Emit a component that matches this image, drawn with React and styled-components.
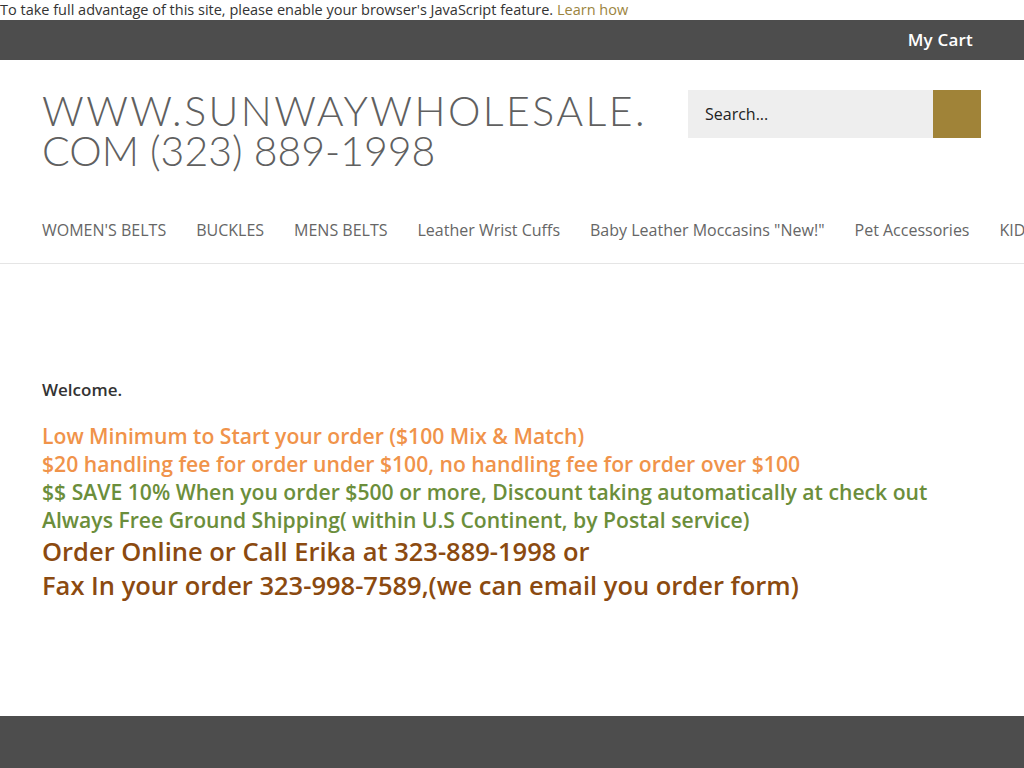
import React from 'react';
import styled, { createGlobalStyle } from 'styled-components';

const Global = createGlobalStyle`
  html, body {
    margin: 0;
    padding: 0;
    overflow-x: hidden;
    background: #fff;
    font-family: "Open Sans", "Liberation Sans", sans-serif;
    color: #333;
  }
`;

const Page = styled.div`
  min-height: 768px;
  display: flex;
  flex-direction: column;
`;

const Notice = styled.div`
  height: 20px;
  line-height: 20px;
  font-size: 14.5px;
  color: #333;
  white-space: nowrap;

  a {
    color: #9b8440;
    text-decoration: none;
  }
`;

const TopBar = styled.div`
  height: 40px;
  background: #4d4d4d;
  display: flex;
  justify-content: flex-end;
  align-items: center;
  padding-right: 51px;
`;

const CartLink = styled.a`
  color: #fff;
  font-size: 17px;
  font-weight: 600;
  text-decoration: none;
  letter-spacing: 0.2px;
  margin-top: -2px;
`;

const Header = styled.header`
  display: flex;
  justify-content: space-between;
  align-items: flex-start;
  padding: 30px 43px 0 42px;
  height: 140px;
  box-sizing: border-box;
`;

const Logo = styled.h1`
  margin: 0;
  width: 630px;
  font-family: "Lato", "Open Sans", sans-serif;
  font-weight: 300;
  font-size: 41px;
  line-height: 41px;
  letter-spacing: 2.45px;
  color: #606060;
  text-transform: uppercase;
  white-space: nowrap;
`;

const LogoLine = styled.span`
  display: block;
  letter-spacing: ${p => p.spacing || 'inherit'};
  margin-top: ${p => (p.second ? '-1px' : '0')};
`;

const SearchForm = styled.form`
  display: flex;
`;

const SearchInput = styled.input`
  width: 245px;
  height: 48px;
  box-sizing: border-box;
  border: none;
  background: #eeeeee;
  padding: 0 17px;
  font-family: "Open Sans", sans-serif;
  font-size: 16px;
  color: #222;
  outline: none;

  &::placeholder {
    color: #222;
  }
`;

const SearchButton = styled.button`
  width: 48px;
  height: 48px;
  border: none;
  background: #a08338;
`;

const Nav = styled.nav`
  height: 64px;
  border-bottom: 1px solid #e5e5e5;
  display: flex;
  align-items: center;
  gap: 30px;
  padding-left: 42px;
  white-space: nowrap;
  overflow: hidden;
  box-sizing: border-box;
`;

const NavItem = styled.a`
  font-size: 16px;
  color: #666;
  text-decoration: none;
  padding-bottom: 4px;
`;

const Main = styled.main`
  flex: 1;
  padding: 114px 42px 0;
  height: 451px;
  box-sizing: border-box;
`;

const Welcome = styled.p`
  margin: 0 0 20px;
  font-size: 17px;
  line-height: 24px;
  font-weight: 600;
  color: #333;
`;

const Line = styled.div`
  font-size: ${p => (p.big ? '25.5px' : '21.15px')};
  line-height: ${p => (p.big ? '34px' : '28px')};
  font-weight: 600;
  color: ${p => p.color};
  white-space: nowrap;
`;

const Footer = styled.footer`
  height: 52px;
  background: #4d4d4d;
`;

const navItems = [
  "WOMEN'S BELTS",
  'BUCKLES',
  'MENS BELTS',
  'Leather Wrist Cuffs',
  'Baby Leather Moccasins "New!"',
  'Pet Accessories',
  'KIDS BELTS',
];

const ORANGE = '#f0934a';
const GREEN = '#6b8e3b';
const BROWN = '#8b4a10';

export default function App() {
  return (
    <Page>
      <Global />
      <Notice>
        To take full advantage of this site, please enable your browser's JavaScript feature.{' '}
        <a href="#">Learn how</a>
      </Notice>
      <TopBar>
        <CartLink href="#">My Cart</CartLink>
      </TopBar>
      <Header>
        <Logo>
          <LogoLine>WWW.SUNWAYWHOLESALE.</LogoLine>
          <LogoLine second spacing="0">COM (323) 889-1998</LogoLine>
        </Logo>
        <SearchForm onSubmit={e => e.preventDefault()}>
          <SearchInput placeholder="Search..." />
          <SearchButton type="submit" aria-label="Search" />
        </SearchForm>
      </Header>
      <Nav>
        {navItems.map(item => (
          <NavItem key={item} href="#">{item}</NavItem>
        ))}
      </Nav>
      <Main>
        <Welcome>Welcome.</Welcome>
        <Line color={ORANGE}>Low Minimum to Start your order ($100 Mix &amp; Match)</Line>
        <Line color={ORANGE}>$20 handling fee for order under $100, no handling fee for order over $100</Line>
        <Line color={GREEN}>$$ SAVE 10% When you order $500 or more, Discount taking automatically at check out</Line>
        <Line color={GREEN}>Always Free Ground Shipping( within U.S Continent, by Postal service)</Line>
        <Line big color={BROWN}>Order Online or Call Erika at 323-889-1998 or</Line>
        <Line big color={BROWN}>Fax In your order 323-998-7589,(we can email you order form)</Line>
      </Main>
      <Footer />
    </Page>
  );
}
